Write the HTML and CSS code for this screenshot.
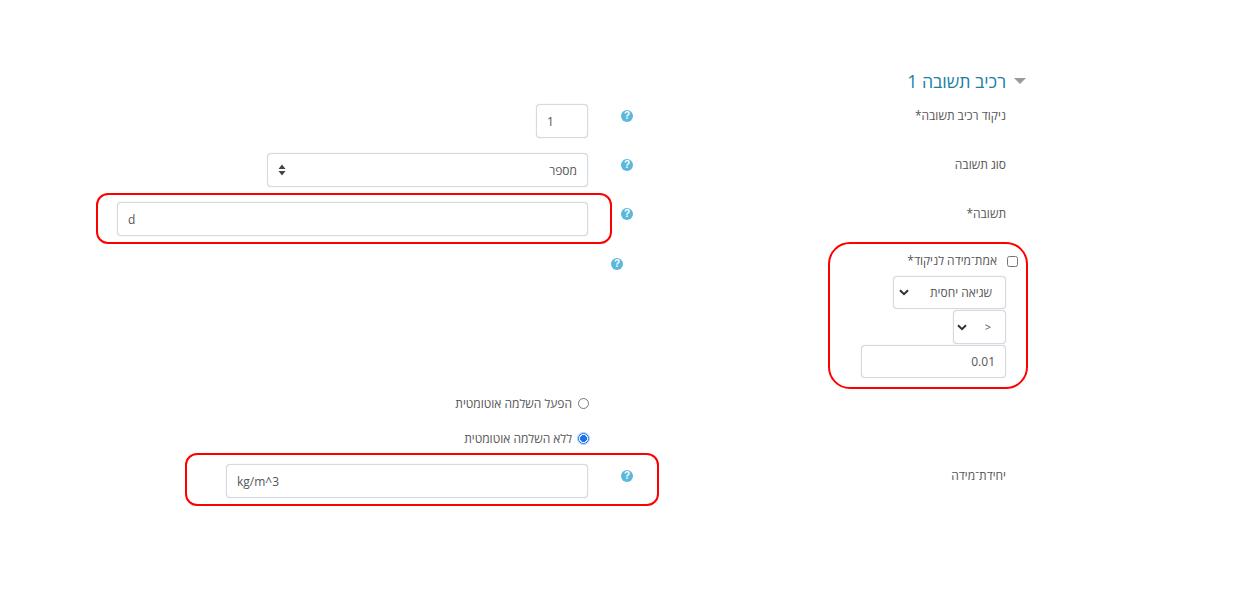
FILE: index.html
```html
<!doctype html>
<html lang="he" dir="rtl">
<head>
  <meta charset="UTF-8">
  <title>רכיב תשובה 1</title>
  <link rel="stylesheet" href="styles.css">
</head>
<body>
  <div class="page">
    <h3 class="head">
      <svg class="caret" width="12" height="6" viewBox="0 0 12 6"><path d="M0 0h12L6 6z" fill="#9a9a9a"/></svg>
      <span>רכיב תשובה 1</span>
    </h3>

    <div class="row">
      <label class="lab">ניקוד רכיב תשובה*</label>
      <div class="hlp"><span class="help">?</span></div>
      <div class="ctl"><input class="box w-short" type="text" value="1" dir="ltr"></div>
    </div>

    <div class="row">
      <label class="lab">סוג תשובה</label>
      <div class="hlp"><span class="help">?</span></div>
      <div class="ctl">
        <div class="box sel w-mid">
          <span>מספר</span>
          <svg width="8" height="12" viewBox="0 0 8 12"><path d="M4 0.5L7.5 5H0.5zM4 11.5L0.5 7H7.5z" fill="#444"/></svg>
        </div>
      </div>
    </div>

    <div class="row">
      <label class="lab">תשובה*</label>
      <div class="hlp"><span class="help">?</span></div>
      <div class="ctl"><input class="box w-long" type="text" value="d" dir="ltr"></div>
    </div>

    <div class="row row-tol">
      <div class="lab tol">
        <label class="chk"><input type="checkbox"><span>אמת־מידה לניקוד*</span></label>
        <div class="box sel w-tol1">
          <span>שגיאה יחסית</span>
          <svg class="chev" width="10" height="7" viewBox="0 0 10 7"><path d="M1 1.2l4 4 4-4" fill="none" stroke="#333" stroke-width="2"/></svg>
        </div>
        <div class="box sel w-tol2">
          <span class="lt">&lt;</span>
          <svg class="chev" width="10" height="7" viewBox="0 0 10 7"><path d="M1 1.2l4 4 4-4" fill="none" stroke="#333" stroke-width="2"/></svg>
        </div>
        <input class="box w-tol3" type="text" value="0.01" dir="rtl">
      </div>
      <div class="hlp hlp-tol"><span class="help">?</span></div>
      <div class="ctl"></div>
    </div>

    <div class="radios">
      <label class="rad"><input type="radio" name="auto"><span>הפעל השלמה אוטומטית</span></label>
      <label class="rad"><input type="radio" name="auto" class="focused" checked><span>ללא השלמה אוטומטית</span></label>
    </div>

    <div class="row">
      <label class="lab">יחידת־מידה</label>
      <div class="hlp"><span class="help">?</span></div>
      <div class="ctl"><input class="box w-unit" type="text" value="kg/m^3" dir="ltr"></div>
    </div>

    <!-- red marks drawn over the form -->
    <div class="mark mark-a"></div>
    <div class="mark mark-b"></div>
    <div class="mark mark-c"></div>
  </div>
</body>
</html>
```

FILE: styles.css
```css
* { box-sizing: border-box; }
body { margin: 0; background: #fff; }
.page {
  position: relative;
  height: 604px;
  padding: 68px 252px 0 0;
  font-family: "Open Sans", "Noto Sans", "Liberation Sans", sans-serif;
  font-size: 12px;
  color: #555;
  overflow: hidden;
}
.head {
  display: flex;
  align-items: center;
  gap: 8px;
  margin: 0 -20px 0 0;
  height: 26px;
  font-size: 17.7px;
  font-weight: 400;
  color: #1a7fa5;
}
.row {
  display: grid;
  grid-template-columns: 366px 52px 1fr;
  margin-top: 15px;
}
.row:first-of-type { margin-top: 10px; }
.lab { padding-top: 3px; line-height: 18px; }
.hlp { padding: 6px 7px 0 0; }
.help {
  display: block;
  width: 12px;
  height: 12px;
  border-radius: 50%;
  background: #5bb8dc;
  color: #fff;
  font: bold 10px/12px "Liberation Sans", sans-serif;
  text-align: center;
}
.ctl { display: flex; }
.box {
  height: 34px;
  padding: 0 10px;
  border: 1px solid #d5d9e0;
  border-radius: 4px;
  background: #fff;
  font-family: inherit;
  font-size: 12px;
  color: #555;
  box-shadow: 0 0 1px #c9ced6;
}
input.box { display: block; outline: none; }
.sel { display: flex; align-items: center; justify-content: space-between; }
.w-short { width: 52px; }
.w-mid { width: 321px; }
.w-long { width: 471px; }
.w-unit { width: 362px; }
.row-tol { min-height: 137px; }
.tol { display: flex; flex-direction: column; align-items: flex-start; padding-top: 0; }
.chk { display: flex; align-items: center; gap: 10px; margin: 1px -12px 6px 0; height: 18px; }
.chk input { width: 11px; height: 11px; margin: 0; }
.w-tol1 { width: 113px; height: 33px; padding: 0 13px 0 5px; }
.w-tol2 { width: 53px; height: 34px; margin-top: 1px; padding: 0 14px 0 3px; }
.w-tol3 { width: 145px; height: 33px; margin-top: 1px; }
.lt { font-size: 11px; }
.hlp-tol { padding: 7px 17px 0 0; }
.radios {
  display: flex;
  flex-direction: column;
  gap: 17px;
  margin: 0 417px 0 0;
  padding: 6px 0 2px;
}
.rad { display: flex; align-items: center; gap: 6px; height: 18px; }
.rad input {
  appearance: none;
  width: 11px;
  height: 11px;
  margin: 0;
  border: 1px solid #777;
  border-radius: 50%;
  background: #fff;
}
.rad input:checked {
  border-color: #1a73e8;
  background: radial-gradient(#1a73e8 50%, #fff 58%);
}
.rad .focused { box-shadow: 0 0 0 1px #a9cdf7; }
.mark {
  position: absolute;
  border: 2px solid #f00;
  border-radius: 12px;
}
.mark-a { left: 96px; top: 193px; width: 516px; height: 51px; }
.mark-b { left: 828px; top: 242px; width: 200px; height: 147px; border-radius: 22px; }
.mark-c { left: 185px; top: 453px; width: 474px; height: 53px; }
```
